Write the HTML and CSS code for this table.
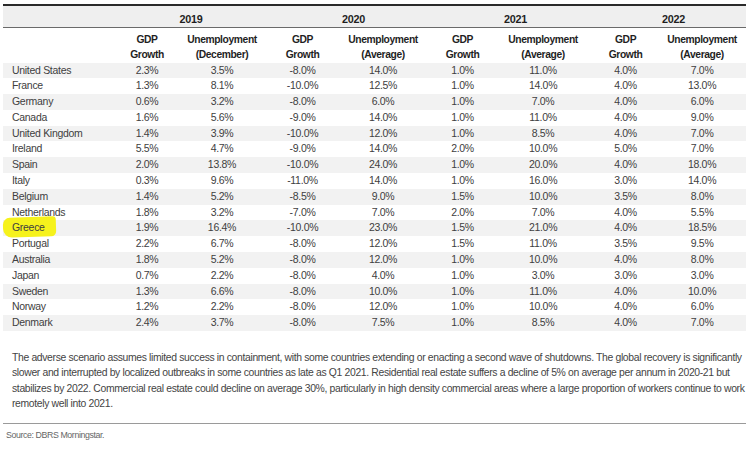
FILE: index.html
```html
<!DOCTYPE html>
<html lang="en">
<head>
<meta charset="utf-8">
<title>Adverse scenario</title>
<link rel="stylesheet" href="styles.css">
</head>
<body>
<div class="report">
  <table class="data">
    <colgroup>
      <col class="c-country">
      <col class="c-g19"><col class="c-u19">
      <col class="c-g20"><col class="c-u20">
      <col class="c-g21"><col class="c-u21">
      <col class="c-g22"><col class="c-u22">
    </colgroup>
    <thead>
      <tr class="years">
        <th></th>
        <th colspan="2" class="y19">2019</th>
        <th colspan="2" class="y20">2020</th>
        <th colspan="2" class="y21">2021</th>
        <th colspan="2" class="y22">2022</th>
      </tr>
      <tr class="labels">
        <th></th>
        <th>GDP<br>Growth</th><th>Unemployment<br>(December)</th>
        <th>GDP<br>Growth</th><th>Unemployment<br>(Average)</th>
        <th>GDP<br>Growth</th><th>Unemployment<br>(Average)</th>
        <th>GDP<br>Growth</th><th>Unemployment<br>(Average)</th>
      </tr>
    </thead>
    <tbody>
      <tr><td>United States</td><td>2.3%</td><td>3.5%</td><td>-8.0%</td><td>14.0%</td><td>1.0%</td><td>11.0%</td><td>4.0%</td><td>7.0%</td></tr>
      <tr><td>France</td><td>1.3%</td><td>8.1%</td><td>-10.0%</td><td>12.5%</td><td>1.0%</td><td>14.0%</td><td>4.0%</td><td>13.0%</td></tr>
      <tr><td>Germany</td><td>0.6%</td><td>3.2%</td><td>-8.0%</td><td>6.0%</td><td>1.0%</td><td>7.0%</td><td>4.0%</td><td>6.0%</td></tr>
      <tr><td>Canada</td><td>1.6%</td><td>5.6%</td><td>-9.0%</td><td>14.0%</td><td>1.0%</td><td>11.0%</td><td>4.0%</td><td>9.0%</td></tr>
      <tr><td>United Kingdom</td><td>1.4%</td><td>3.9%</td><td>-10.0%</td><td>12.0%</td><td>1.0%</td><td>8.5%</td><td>4.0%</td><td>7.0%</td></tr>
      <tr><td>Ireland</td><td>5.5%</td><td>4.7%</td><td>-9.0%</td><td>14.0%</td><td>2.0%</td><td>10.0%</td><td>5.0%</td><td>7.0%</td></tr>
      <tr><td>Spain</td><td>2.0%</td><td>13.8%</td><td>-10.0%</td><td>24.0%</td><td>1.0%</td><td>20.0%</td><td>4.0%</td><td>18.0%</td></tr>
      <tr><td>Italy</td><td>0.3%</td><td>9.6%</td><td>-11.0%</td><td>14.0%</td><td>1.0%</td><td>16.0%</td><td>3.0%</td><td>14.0%</td></tr>
      <tr><td>Belgium</td><td>1.4%</td><td>5.2%</td><td>-8.5%</td><td>9.0%</td><td>1.5%</td><td>10.0%</td><td>3.5%</td><td>8.0%</td></tr>
      <tr><td>Netherlands</td><td>1.8%</td><td>3.2%</td><td>-7.0%</td><td>7.0%</td><td>2.0%</td><td>7.0%</td><td>4.0%</td><td>5.5%</td></tr>
      <tr><td class="hl-cell"><span class="highlight"></span><span class="hl-text">Greece</span></td><td>1.9%</td><td>16.4%</td><td>-10.0%</td><td>23.0%</td><td>1.5%</td><td>21.0%</td><td>4.0%</td><td>18.5%</td></tr>
      <tr><td>Portugal</td><td>2.2%</td><td>6.7%</td><td>-8.0%</td><td>12.0%</td><td>1.5%</td><td>11.0%</td><td>3.5%</td><td>9.5%</td></tr>
      <tr><td>Australia</td><td>1.8%</td><td>5.2%</td><td>-8.0%</td><td>12.0%</td><td>1.0%</td><td>10.0%</td><td>4.0%</td><td>8.0%</td></tr>
      <tr><td>Japan</td><td>0.7%</td><td>2.2%</td><td>-8.0%</td><td>4.0%</td><td>1.0%</td><td>3.0%</td><td>3.0%</td><td>3.0%</td></tr>
      <tr><td>Sweden</td><td>1.3%</td><td>6.6%</td><td>-8.0%</td><td>10.0%</td><td>1.0%</td><td>11.0%</td><td>4.0%</td><td>10.0%</td></tr>
      <tr><td>Norway</td><td>1.2%</td><td>2.2%</td><td>-8.0%</td><td>12.0%</td><td>1.0%</td><td>10.0%</td><td>4.0%</td><td>6.0%</td></tr>
      <tr><td>Denmark</td><td>2.4%</td><td>3.7%</td><td>-8.0%</td><td>7.5%</td><td>1.0%</td><td>8.5%</td><td>4.0%</td><td>7.0%</td></tr>
    </tbody>
  </table>
  <p class="note">The adverse scenario assumes limited success in containment, with some countries extending or enacting a second wave of shutdowns. The global recovery is significantly<br>slower and interrupted by localized outbreaks in some countries as late as Q1 2021. Residential real estate suffers a decline of 5% on average per annum in 2020-21 but<br>stabilizes by 2022. Commercial real estate could decline on average 30%, particularly in high density commercial areas where a large proportion of workers continue to work<br>remotely well into 2021.</p>
  <div class="source">Source: DBRS Morningstar.</div>
</div>
</body>
</html>
```

FILE: styles.css
```css
html, body {
  margin: 0;
  padding: 0;
  background: #ffffff;
}

body {
  font-family: "Liberation Sans", Arial, sans-serif;
  color: #3a3a3a;
}

.report {
  padding: 4px 8px 0 3px;
}

.data {
  width: 743px;
  table-layout: fixed;
  border-collapse: collapse;
  border-spacing: 0;
  font-size: 10.5px;
  letter-spacing: -0.3px;
}

.c-country { width: 109px; }
.c-g19 { width: 70px; }
.c-u19 { width: 80px; }
.c-g20 { width: 81px; }
.c-u20 { width: 80px; }
.c-g21 { width: 79px; }
.c-u21 { width: 82px; }
.c-g22 { width: 83px; }
.c-u22 { width: 79px; }

.data th, .data td {
  padding: 0;
  text-align: center;
  white-space: nowrap;
}

.data th:last-child, .data td:last-child {
  padding-right: 9px;
}

.years {
  border-top: 2px solid #2a2a2a;
  border-bottom: 1px solid #6a6a6a;
  background: #efefef;
}

.years th {
  height: 21px;
  box-sizing: border-box;
  padding-top: 6px;
  line-height: 15px;
  vertical-align: top;
  font-size: 10.8px;
  font-weight: bold;
  letter-spacing: -0.2px;
  color: #1f1f1f;
}

.years .y19 { padding-left: 8px; }
.years .y20 { padding-left: 22px; }
.years .y21 { padding-left: 24px; }
.years .y22 { padding-left: 26px; }

.labels th {
  height: 35px;
  box-sizing: border-box;
  padding-top: 4px;
  line-height: 15px;
  vertical-align: top;
  font-size: 10.3px;
  font-weight: bold;
  letter-spacing: -0.4px;
  color: #1f1f1f;
}

.data tbody td {
  height: 15.8px;
  line-height: 15.8px;
  color: #404040;
}

.data tbody td:first-child {
  text-align: left;
  padding-left: 9px;
}

.data tbody tr:nth-child(odd) {
  background: #f2f2f2;
}

.hl-cell {
  position: relative;
}

.highlight {
  position: absolute;
  left: 0;
  top: -3px;
  width: 53px;
  height: 20px;
  background: #f6f21c;
  border-radius: 7px 3px 5px 9px;
  transform: rotate(-2deg);
}

.hl-text {
  position: relative;
}

.note {
  margin: 19px 0 0 9px;
  font-size: 10.4px;
  letter-spacing: -0.35px;
  line-height: 15.3px;
  color: #444444;
  white-space: nowrap;
}

.source {
  margin-top: 12px;
  border-top: 1px solid #9a9a9a;
  padding: 5px 0 0 3px;
  font-size: 8.8px;
  letter-spacing: -0.4px;
  line-height: 12px;
  color: #666666;
}
```
